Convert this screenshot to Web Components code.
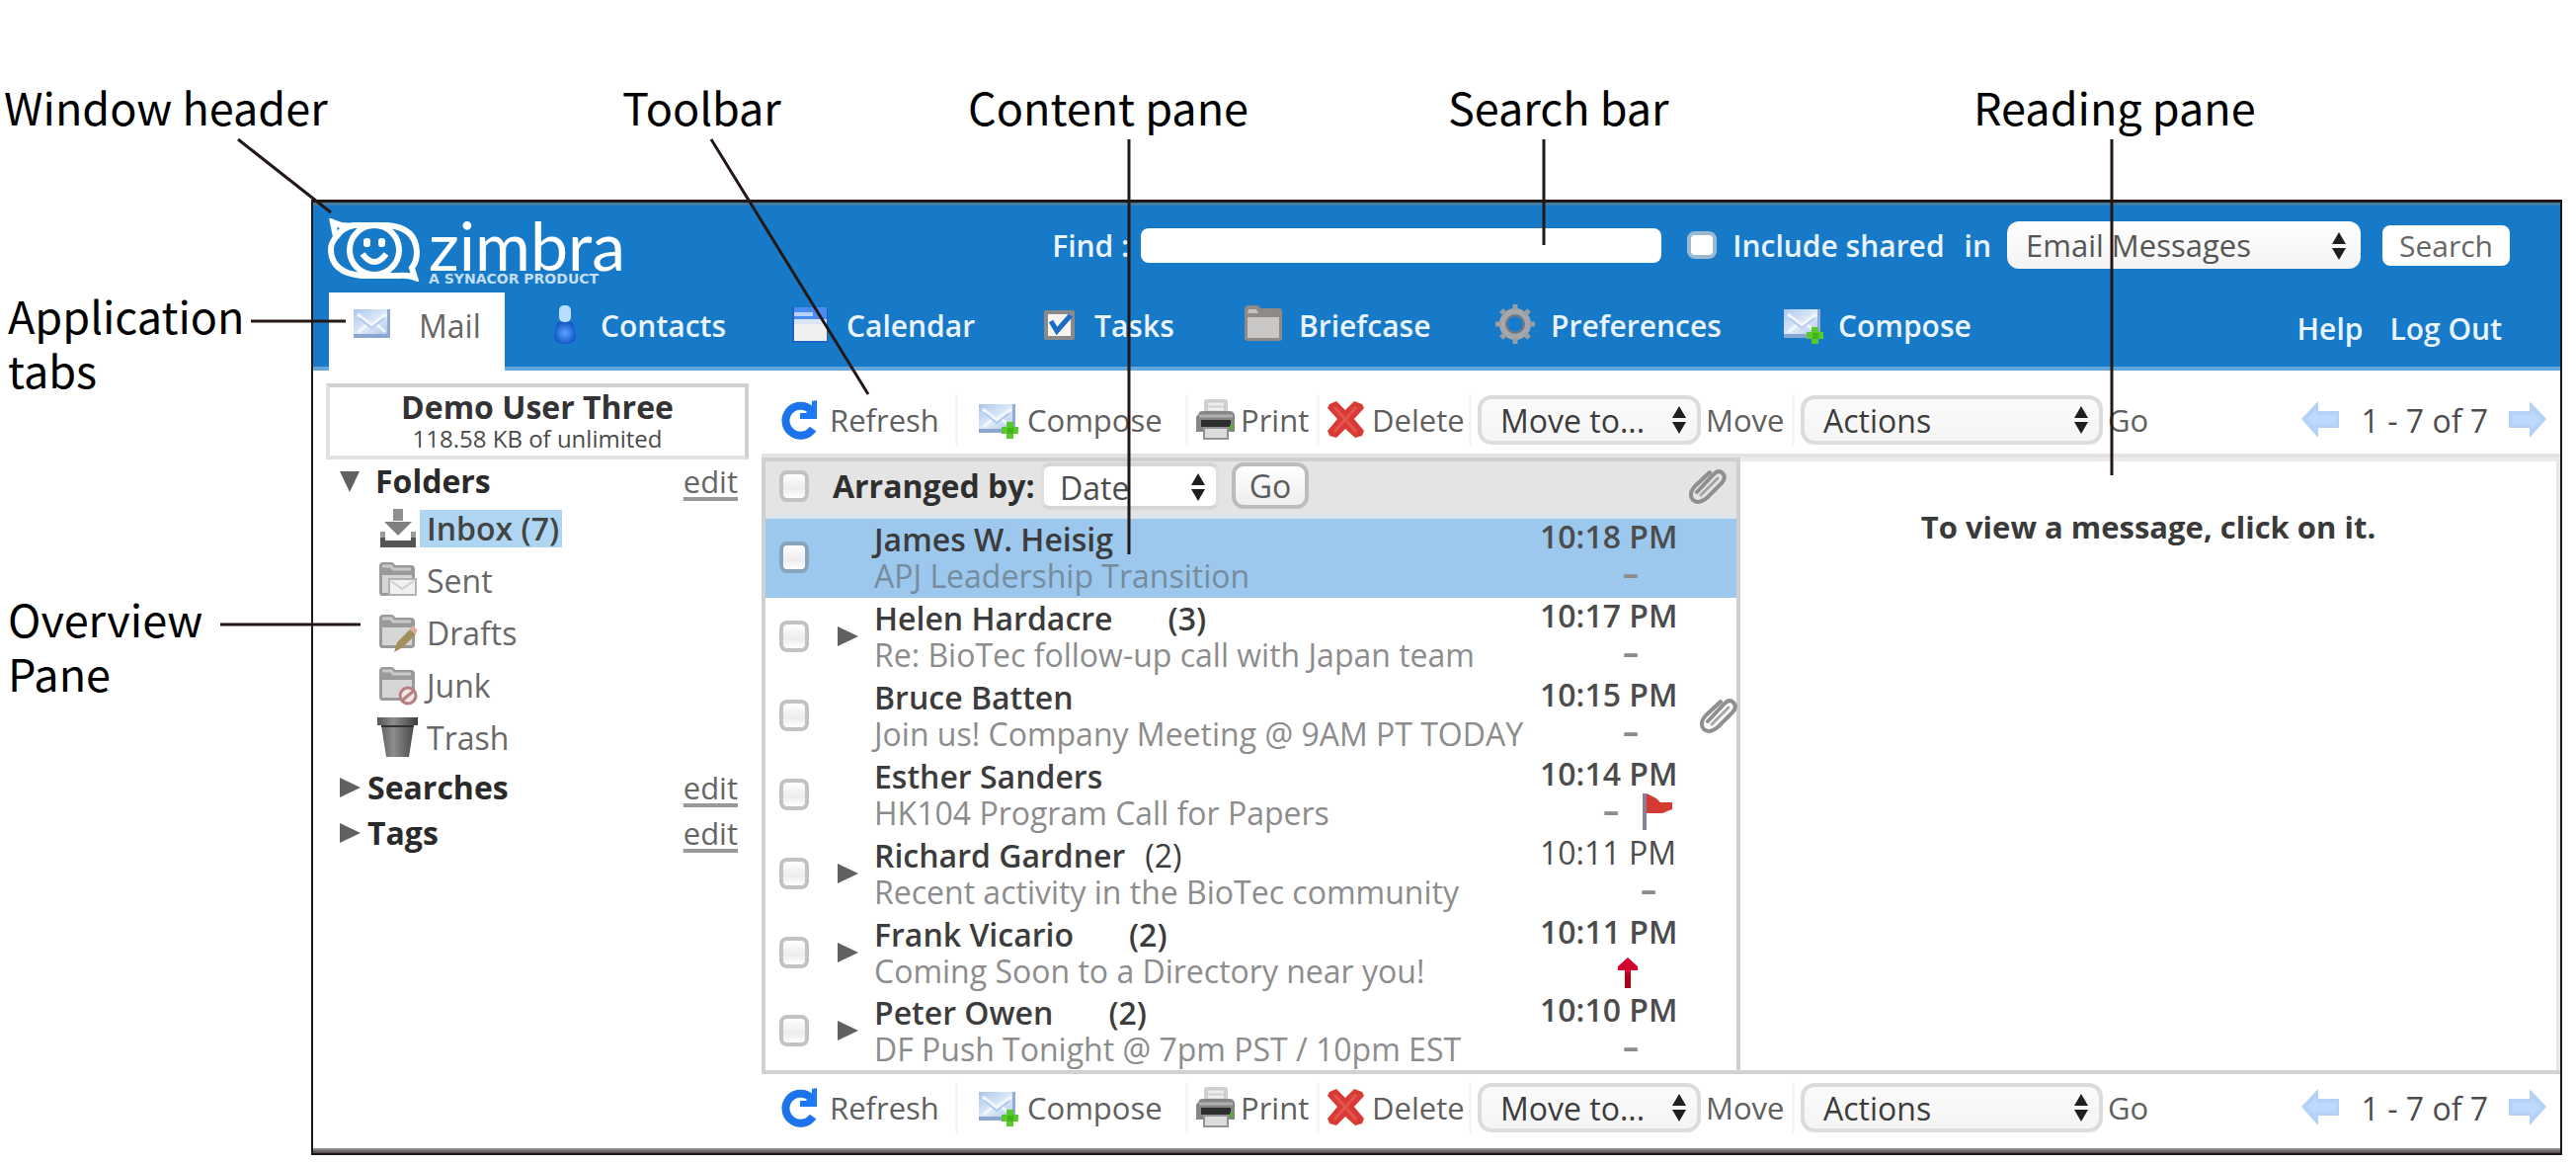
<!DOCTYPE html>
<html lang="en">
<head>
<meta charset="utf-8">
<title>Zimbra Web Client – window overview</title>
<style>
  body { margin: 0; background: #fff; font-family: "Open Sans", "Noto Sans", sans-serif; font-size: 32px; color: #444; }
</style>
</head>
<body>
<zm-diagram>
  <zm-callout style="left:4px;top:80px">Window header</zm-callout>
  <zm-callout style="left:630px;top:80px">Toolbar</zm-callout>
  <zm-callout style="left:980px;top:80px">Content pane</zm-callout>
  <zm-callout style="left:1466px;top:80px">Search bar</zm-callout>
  <zm-callout style="left:1998px;top:80px">Reading pane</zm-callout>
  <zm-callout style="left:8px;top:291px">Application<br>tabs</zm-callout>
  <zm-callout style="left:8px;top:598px">Overview<br>Pane</zm-callout>
  <zm-window slot="window">
    <zm-header slot="header"></zm-header>
    <zm-overview slot="overview"></zm-overview>
    <zm-toolbar slot="top" label="Top toolbar"></zm-toolbar>
    <zm-list slot="list">
      <zm-message selected subject="APJ Leadership Transition" time="10:18 PM">James W. Heisig</zm-message>
      <zm-message thread count="(3)" subject="Re: BioTec follow-up call with Japan team" time="10:17 PM">Helen Hardacre</zm-message>
      <zm-message subject="Join us! Company Meeting @ 9AM PT TODAY" time="10:15 PM" clip>Bruce Batten</zm-message>
      <zm-message subject="HK104 Program Call for Papers" time="10:14 PM" mark="flag">Esther Sanders</zm-message>
      <zm-message thread read count="(2)" subject="Recent activity in the BioTec community" time="10:11 PM" mark="end">Richard Gardner</zm-message>
      <zm-message thread count="(2)" subject="Coming Soon to a Directory near you!" time="10:11 PM" mark="high">Frank Vicario</zm-message>
      <zm-message thread count="(2)" subject="DF Push Tonight @ 7pm PST / 10pm EST" time="10:10 PM">Peter Owen</zm-message>
    </zm-list>
    <zm-reader slot="reader">To view a message, click on it.</zm-reader>
    <zm-toolbar slot="bottom" label="Bottom toolbar"></zm-toolbar>
  </zm-window>
</zm-diagram>

<script>
const mailBody = `<defs><linearGradient id="m" x1="0" y1="0" x2="1" y2="1"><stop offset="0" stop-color="#a9c6ee"/><stop offset=".5" stop-color="#dfeafa"/><stop offset="1" stop-color="#a3bfe6"/></linearGradient></defs>
  <rect x="1" y="5" width="37" height="28" fill="url(#m)"/><rect x="1" y="30" width="37" height="4" fill="#8aa6cf"/><rect x="35" y="5" width="3" height="29" fill="#8fabd3"/>
  <path d="M5 10 L19 21 L34 10 M6 28 L15 20 M33 28 L24 20" fill="none" stroke="#f3f8ff" stroke-width="3"/><path d="M7 14 L19 24 L32 14" fill="none" stroke="#b3caef" stroke-width="2"/>`;
const folder = `<path d="M2 6 Q2 2 6 2 H14 Q17 2 18 5 H34 Q38 5 38 9 V33 Q38 36 34 36 H5 Q2 36 2 32 Z" fill="#9a9a9a"/><path d="M5 15 H35 V33 H5 Z" fill="#d6d6d6"/><path d="M5 6 H14 L16 9 H34" stroke="#c9c9c9" stroke-width="3" fill="none"/>`;
const icons = {
  mail: mailBody,
  compose: mailBody + `<path d="M29 23 H36 V28 H41 V35 H36 V40 H29 V35 H24 V28 H29 Z" fill="#58c92c"/><path d="M30 29 H36 V35 H30 Z" fill="#3fb416"/>`,
  contact: `<defs><radialGradient id="c"><stop offset="0" stop-color="#5ba4ff"/><stop offset="1" stop-color="#1559c9"/></radialGradient></defs><rect x="14" y="1" width="12" height="17" rx="5" fill="#b9dcff"/><path d="M13 18 H27 Q31 24 31 32 Q31 40 20 40 Q9 40 9 32 Q9 24 13 18 Z" fill="url(#c)"/>`,
  calendar: `<rect x="1" y="3" width="36" height="36" fill="#1c63c6"/><rect x="3" y="3" width="33" height="15" fill="#4a8df2"/><path d="M3 8 H22 V12 H3 Z" fill="#b8d0fa"/><rect x="3" y="15" width="33" height="5" fill="#d9e6fb"/><rect x="3" y="20" width="33" height="17" fill="#f1f0ee"/>`,
  tasks: `<rect x="5" y="6" width="31" height="30" rx="2" fill="#8b8a8a"/><rect x="9" y="10" width="23" height="22" fill="#f6f4ef"/><path d="M12 17 L18 27 L32 11" fill="none" stroke="#1c6cc4" stroke-width="5"/>`,
  briefcase: `<path d="M1 6 Q1 1 6 1 H13 Q16 1 17 4 H36 Q39 4 39 8 V34 Q39 37 36 37 H4 Q1 37 1 34 Z" fill="#8f8a86"/><path d="M4 13 H36 V34 H4 Z" fill="#c9c8c7"/><path d="M5 5 H13 L15 9 H4 Z" fill="#c5c2c0"/>`,
  gear: `<circle cx="20" cy="20" r="12" fill="none" stroke="#a5a7aa" stroke-width="8"/><g stroke="#9b9da0" stroke-width="5"><path d="M20 0 V6 M20 34 V40 M0 20 H6 M34 20 H40 M6 6 L10 10 M30 30 L34 34 M34 6 L30 10 M6 34 L10 30"/></g><circle cx="20" cy="20" r="9" fill="none" stroke="#72777d" stroke-width="2"/>`,
  refresh: `<path d="M31 11 A15 15 0 1 0 33 30" fill="none" stroke="#1c73ea" stroke-width="8"/><path d="M37 1 V20 H20 V14 H26 L32 8 V2 Z" fill="#1b79f5"/>`,
  print: `<rect x="9" y="0" width="24" height="18" rx="3" fill="#cfcfcf"/><path d="M13 5 H29 M13 10 H29" stroke="#ededed" stroke-width="3"/><path d="M4 14 Q4 12 8 12 H34 Q40 12 40 17 V33 H1 V18 Z" fill="#868686"/><path d="M4 17 H38" stroke="#b0b0b0" stroke-width="3"/><rect x="6" y="21" width="30" height="7" fill="#2e2e2e"/><rect x="35" y="26" width="4" height="5" fill="#58a83c"/><path d="M9 29 H33 V40 H9 Z" fill="#dcdcdc" stroke="#949494" stroke-width="2"/>`,
  remove: `<path d="M3 5 L10 2 L19 11 L28 2 L36 5 L38 9 L28 20 L38 32 L36 37 L29 39 L19 30 L10 39 L3 37 L1 32 L11 20 L1 9 Z" fill="#da3a34"/><path d="M8 8 L30 33 M30 8 L8 33" stroke="#e4544d" stroke-width="3"/>`,
  inbox: `<rect x="16" y="1" width="10" height="12" fill="#909090"/><path d="M7 14 H35 L21 28 Z" fill="#808080"/><path d="M3 24 H8 V33 H34 V24 H39 V40 H3 Z" fill="#555"/><path d="M3 24 H8 V30 H3 Z M34 24 H39 V30 H34 Z" fill="#9b9b9b"/>`,
  sent: folder + `<path d="M12 19 H39 V35 H12 Z" fill="#f1f1f1" stroke="#b2b2b2" stroke-width="2"/><path d="M14 21 L25 29 L37 21" fill="none" stroke="#cfcfcf" stroke-width="2"/>`,
  drafts: folder + `<path d="M17 40 L20 30 L33 17 L39 22 L26 35 Z" fill="#a1905a"/><path d="M33 17 L36 13 L41 18 L38 22 Z" fill="#e3a9a4"/>`,
  junk: folder + `<circle cx="31" cy="31" r="8" fill="#f3e6e5" stroke="#b5817f" stroke-width="3"/><path d="M25 36 L37 26" stroke="#b5817f" stroke-width="3"/>`,
  trash: `<defs><linearGradient id="t"><stop offset="0" stop-color="#555"/><stop offset=".4" stop-color="#8d8d8d"/><stop offset="1" stop-color="#3c3c3c"/></linearGradient></defs><path d="M0 0 H41 V8 H37 L32 40 H9 L4 8 H0 Z" fill="url(#t)"/><path d="M4 9 H37" stroke="#333" stroke-width="2"/>`,
  clip: `<g fill="none" stroke="#8f8f8f" stroke-width="4" stroke-linecap="round"><path d="M10 27 L27 9 Q32 4 36 8 Q40 12 35 18 L21 32 Q12 40 6 35 Q1 29 8 21 L23 7"/><path d="M14 30 L31 13" stroke="#a5a5a5" stroke-width="3"/></g>`,
  flag: `<g transform="translate(0 4)"><path d="M4 0 V37" stroke="#8b7f95" stroke-width="4"/><path d="M6 0 L16 5 L20 9 H32 V16 L22 20 H6 Z" fill="#d53a33"/></g>`,
  high: `<g transform="translate(0 10)"><path d="M11 0 L21 9 V13 H14 V31 H8 V13 H1 V9 Z" fill="#d4002e"/><path d="M8 16 H14 V31 H8 Z" fill="#b00016"/></g>`,
  prev: `<path d="M1 20 L18 2 V12 H39 V29 H18 V39 Z" fill="#b4d2f8"/><path d="M7 20 L16 11 V16 H36 V25 H16 V30 Z" fill="#bddafc"/>`,
  next: `<path d="M39 20 L22 2 V12 H1 V29 H22 V39 Z" fill="#b4d2f8"/><path d="M33 20 L24 11 V16 H4 V25 H24 V30 Z" fill="#bddafc"/>`
};

const reset = `*{box-sizing:border-box} button,select,input{font:inherit;color:inherit;margin:0} button{border:0;background:none;padding:0;cursor:pointer;white-space:nowrap} a{color:inherit}
  .check{appearance:none;width:30px;height:32px;border:4px solid #c2c2c2;border-radius:8px;background:linear-gradient(#fff,#ececec 60%,#fff)}`;

function define(name, render) {
  customElements.define(name, class extends HTMLElement {
    connectedCallback() {
      if (this.shadowRoot) return;
      this.attachShadow({ mode: "open" }).innerHTML = render(this);
    }
  });
}

define("zm-icon", el => `<style>:host{display:block;flex:none;width:42px;height:42px}svg{display:block;width:100%;height:100%}</style>
  <svg viewBox="0 0 42 42" aria-hidden="true">${icons[el.getAttribute("name")]}</svg>`);

define("zm-twisty", () => `<style>:host{display:block;flex:none;width:24px;height:24px}:host([open]){transform:rotate(90deg)}svg{display:block}</style>
  <svg width="24" height="24" aria-hidden="true"><path d="M2 2 L23 12 L2 22 Z" fill="#616161"/></svg>`);

define("zm-select", el => `<style>${reset}
  :host{display:block;position:relative;height:50px}
  select{appearance:none;width:100%;height:100%;padding:0 40px 0 19px;border:4px solid #dcdcdc;border-radius:14px;background:linear-gradient(#fafafa,#f5f5f5);text-overflow:clip}
  :host([plain]) select{border:0;border-radius:12px;background:linear-gradient(#fff,#f3f3f3)}
  :host([small]) select{border-color:#d6d6d6 #e0e0e0;border-radius:10px;background:#fff;padding-left:16px}
  svg{position:absolute;right:14px;top:11px;pointer-events:none}</style>
  <select aria-label="${el.getAttribute("label")}">${el.getAttribute("options").split("|").map(o => `<option>${o}</option>`).join("")}</select>
  <svg width="16" height="28" aria-hidden="true"><path d="M8 0 L15 12 H1 Z M1 16 H15 L8 28 Z" fill="#1f1f1f"/></svg>`);

define("zm-callout", () => `<style>:host{position:absolute;font:400 45px/55px "Noto Sans CJK JP","Open Sans",sans-serif;color:#000;white-space:nowrap}</style><slot></slot>`);

define("zm-diagram", () => `<style>
  :host{display:block;position:relative;padding:202px 14px 0 315px}
  .lines{position:absolute;inset:0;width:100%;height:100%;pointer-events:none}
  </style>
  <slot name="window"></slot>
  <svg class="lines" aria-hidden="true"><g stroke="#231815" stroke-width="3"><path d="M241 141 L335 215 M720 141 L879 399 M1143 141 V561 M1563 141 V248 M2138 141 V481 M254 325 H350 M223 632 H365"/></g></svg>
  <slot></slot>`);

define("zm-window", () => `<style>${reset}
  :host{display:block;border:3px solid #231815;border-width:3px 2px 2px;background:#fff}
  .body{display:flex;align-items:stretch}
  .side{flex:0 0 454px}
  .main{flex:1;min-width:0}
  .panes{display:flex;border-top:4px solid #e3e3e3;border-bottom:4px solid #d2d2d2}
  ::slotted(zm-list){flex:989 1 0;min-width:0}
  ::slotted(zm-reader){flex:831 1 0;min-width:0}
  .top{padding-top:16px}.bottom{padding-bottom:7px}
  .foot{height:5px;background:linear-gradient(#9a9a9a,#4a4646)}</style>
  <slot name="header"></slot>
  <div class="body"><div class="side"><slot name="overview"></slot></div>
    <div class="main"><div class="top"><slot name="top"></slot></div>
      <div class="panes"><slot name="list"></slot><slot name="reader"></slot></div>
      <div class="bottom"><slot name="bottom"></slot></div></div></div>
  <div class="foot"></div>`);

define("zm-logo", () => `<style>
  :host{display:flex;gap:6px;color:#fff;align-items:flex-start}
  svg{display:block;width:98px;height:64px}
  .word{font:400 68px/54px Lato,sans-serif}
  .sub{font:700 14px/14px "DejaVu Sans",sans-serif;color:#c4def5;white-space:nowrap}</style>
  <svg viewBox="0 0 98 64" aria-hidden="true"><g fill="none" stroke="#fff" stroke-width="6"><path d="M10 19 L7 4 Q17 9 28 7 H62 Q91 9 92 34 Q92 44 87 50 L90 60 Q82 57 74 58 H36 Q5 55 5 31 Q5 24 12 17 Q16 10 28 7"/><circle cx="49" cy="32" r="25"/></g><g fill="#fff"><rect x="38" y="20" width="7" height="9" rx="3"/><rect x="53" y="20" width="7" height="9" rx="3"/></g><path d="M37 36 Q49 52 61 36" fill="none" stroke="#fff" stroke-width="6"/></svg>
  <div><div class="word">zimbra</div><div class="sub">A SYNACOR PRODUCT</div></div>`);

define("zm-header", () => {
  const tab = (icon, text) => `<a href="#"><zm-icon name="${icon}"></zm-icon>${text}</a>`;
  return `<style>${reset}
  :host{display:block;background:#177ac9;color:#eaf4ff;border-top:3px solid #3f7cab;font-weight:600;font-size:30px}
  .find{display:flex;align-items:center;height:88px;padding:0 51px 8px 13px}
  zm-logo{margin-right:auto;align-self:flex-start;padding-top:13px}
  form{display:flex;align-items:center}
  .q{width:527px;height:35px;border:0;border-radius:8px;background:#fff;margin:0 26px 0 12px;padding:0 12px;color:#333}
  .check{height:28px;margin-right:16px;border-color:#9db9d2;background:#fff}
  .in{margin:0 16px 0 20px}
  zm-select{width:358px;height:48px;color:#555;font-weight:400;font-size:31px;margin-right:22px}
  .go{width:129px;height:41px;border-radius:8px;background:#fff;color:#666;font-weight:400;line-height:41px}
  nav{display:flex;height:79px;border-bottom:4px solid #65a6dc}
  .tabs{display:grid;grid-template-columns:219px 249px 251px 207px 255px 291px 240px;margin-left:16px;height:79px}
  a{display:flex;align-items:center;gap:14px;text-decoration:none;padding-bottom:13px;white-space:nowrap}
  a.on{background:#fff;color:#666;width:178px;padding-left:24px;gap:25px;font-weight:400;font-size:32px}
  .links{margin-left:auto;display:flex;gap:27px;padding-right:59px}
  .links a{padding-bottom:2px}</style>
  <div class="find"><zm-logo></zm-logo>
    <form onsubmit="return false"><label for="q">Find :</label><input class="q" id="q" type="text">
      <input class="check" type="checkbox" id="sh"><label for="sh">Include shared</label><span class="in">in</span>
      <zm-select plain label="in" options="Email Messages|Contacts|Files"></zm-select>
      <button class="go">Search</button></form></div>
  <nav><div class="tabs"><a class="on" href="#"><zm-icon name="mail"></zm-icon>Mail</a>
    ${tab("contact", "Contacts")}${tab("calendar", "Calendar")}${tab("tasks", "Tasks")}${tab("briefcase", "Briefcase")}${tab("gear", "Preferences")}${tab("compose", "Compose")}</div>
    <div class="links"><a href="#">Help</a><a href="#">Log Out</a></div></nav>`;
});

define("zm-overview", () => {
  const item = (icon, text, on) => `<li><zm-icon name="${icon}"></zm-icon><a href="#" class="${on ? "on" : ""}">${text}</a></li>`;
  return `<style>${reset}
  :host{display:block;padding:13px 0 0 13px}
  .user{width:428px;height:77px;border:4px solid #dedede;border-color:#d0d0d0 #cfcfcf #e2e2e2 #e2e2e2;text-align:center;color:#333;padding-top:2px}
  .user b{display:block;line-height:36px}.user span{display:block;font-size:24px;line-height:28px;color:#4a4a4a}
  h2{display:flex;align-items:center;gap:6px;margin:0;height:46px;font-size:32px;line-height:46px;color:#2a2a2a;padding:0 24px 0 12px}
  h2.first{height:43px;gap:14px}
  h2 a{margin-left:auto;font-weight:400;font-size:31px;color:#666;text-decoration-thickness:4px;text-decoration-color:#999;text-underline-offset:4px}
  ul{list-style:none;margin:0;padding:0 0 1px 52px}
  li{display:flex;align-items:center;height:53px;gap:1px}
  li a{text-decoration:none;color:#686868;padding:0 7px;line-height:38px}
  li a.on{background:#aed5f2;color:#444;font-weight:600;padding-right:3px}</style>
  <div class="user"><b>Demo User Three</b><span>118.58 KB of unlimited</span></div>
  <h2 class="first"><zm-twisty open></zm-twisty>Folders<a href="#">edit</a></h2>
  <ul>${item("inbox", "Inbox (7)", true)}${item("sent", "Sent")}${item("drafts", "Drafts")}${item("junk", "Junk")}${item("trash", "Trash")}</ul>
  <h2><zm-twisty></zm-twisty>Searches<a href="#">edit</a></h2>
  <h2><zm-twisty></zm-twisty>Tags<a href="#">edit</a></h2>`;
});

define("zm-toolbar", el => `<style>${reset}
  :host{display:flex;align-items:center;height:68px;color:#606060}
  .cells{display:grid;grid-template-columns:199px 233px 133px 154px 327px 360px;align-items:center}
  .cell{display:flex;align-items:center;height:52px;border-right:3px solid #f5f5f5}
  .cell:last-child{border:0}
  button{display:flex;align-items:center;gap:8px;font-size:31px}
  .tight button{gap:4px}
  .cell:nth-child(1){padding-left:19px}.cell:nth-child(2){padding-left:20px}
  .cell:nth-child(3),.cell:nth-child(4){padding-left:7px}
  .cell:nth-child(n+5){padding-left:6px;gap:5px}
  zm-select{color:#3c3c3c}
  .move{width:226px}.act{width:306px}
  .pager{margin-left:auto;display:flex;align-items:center;gap:20px;padding-right:11px;color:#4c4c4c;white-space:nowrap}</style>
  <div class="cells" role="toolbar" aria-label="${el.getAttribute("label")}">
    <div class="cell"><button><zm-icon name="refresh"></zm-icon>Refresh</button></div>
    <div class="cell"><button><zm-icon name="compose"></zm-icon>Compose</button></div>
    <div class="cell tight"><button><zm-icon name="print"></zm-icon>Print</button></div>
    <div class="cell tight"><button><zm-icon name="remove"></zm-icon>Delete</button></div>
    <div class="cell"><zm-select class="move" label="Move to" options="Move to...|Inbox|Trash"></zm-select><button>Move</button></div>
    <div class="cell"><zm-select class="act" label="Actions" options="Actions|Mark as read|Flag"></zm-select><button>Go</button></div>
  </div>
  <div class="pager"><button aria-label="Previous page"><zm-icon name="prev"></zm-icon></button><span>1 - 7 of 7</span><button aria-label="Next page"><zm-icon name="next"></zm-icon></button></div>`);

define("zm-list", () => `<style>${reset}
  :host{display:block;border-top:4px solid #cfcfcf;border-left:4px solid #d0d0d0;border-right:4px solid #cfcfcf}
  .head{display:flex;align-items:center;height:58px;padding-bottom:5px;background:#e4e4e4;border-bottom:4px solid #dde5ec}
  .pick{display:flex;align-items:center;padding-left:14px;width:61px}
  b{color:#2f2f2f;padding-left:7px;width:217px;white-space:nowrap}
  zm-select{width:182px;height:48px;color:#4c4c4c}
  .go{width:78px;height:47px;margin-left:12px;border:4px solid #bcbcbc;border-radius:12px;background:linear-gradient(#fff,#eee);color:#5c5c5c;line-height:36px}
  .clip{margin-left:auto;width:54px;padding-left:4px}
  ::slotted(zm-message:last-of-type){height:78px}</style>
  <div class="head"><div class="pick"><input class="check" type="checkbox" aria-label="Select all"></div>
    <b>Arranged by:</b><zm-select small label="Arranged by" options="Date|Subject|Size"></zm-select><button class="go">Go</button>
    <div class="clip"><zm-icon name="clip"></zm-icon></div></div>
  <slot></slot>`);

define("zm-message", el => {
  const a = n => el.getAttribute(n), has = n => el.hasAttribute(n), mark = a("mark");
  const dash = `<i>–</i>`;
  const state = mark === "flag" ? dash + `<zm-icon name="flag"></zm-icon>` : mark === "high" ? `<zm-icon name="high"></zm-icon>` : dash;
  return `<style>${reset}
  :host{display:grid;grid-template-columns:62px 48px 1fr 136px 63px;align-items:center;height:80px;padding-bottom:3px;box-sizing:border-box;color:#3c3c3c}
  :host([selected]){background:#9bc8ec}
  .check{margin-left:14px}
  :host([selected]) .check{border-color:#86a5bd}
  zm-twisty{margin-left:9px}
  .name{display:flex;gap:56px;font-weight:600;line-height:38px;white-space:nowrap}
  :host([read]) .name{gap:20px}:host([read]) .name span{font-weight:400}
  .subject{line-height:36px;color:#8c8c8c;white-space:nowrap}
  :host([selected]) .subject{color:#758c9f}
  .time{line-height:32px;color:#4c4c4c;font-weight:600;white-space:nowrap;text-align:right}
  :host([read]) .time{font-weight:400}
  .state{display:flex;justify-content:flex-end;align-items:center;height:42px;padding-right:36px;color:#8c8c8c;line-height:42px}
  .state[data-mark=flag]{padding:0;gap:22px}.state[data-mark=end]{padding-right:18px}
  i{font-style:normal;font-weight:700}
  .state[data-mark=flag] zm-icon{margin-right:-8px}
  .state[data-mark=high] zm-icon{margin-right:-20px}
  .clip{padding-left:24px}</style>
  <input class="check" type="checkbox" aria-label="Select message">
  <div>${has("thread") ? "<zm-twisty></zm-twisty>" : ""}</div>
  <div><div class="name"><slot></slot>${a("count") ? `<span>${a("count")}</span>` : ""}</div><div class="subject">${a("subject")}</div></div>
  <div><div class="time">${a("time")}</div><div class="state" data-mark="${mark || ""}">${state}</div></div>
  <div class="clip">${has("clip") ? `<zm-icon name="clip"></zm-icon>` : ""}</div>`;
});

define("zm-reader", () => `<style>:host{display:block;border-top:4px solid #ebebeb;border-right:4px solid #e6e6e6;text-align:center;font-weight:700;font-size:31px;color:#3a3a3a;padding-top:44px;line-height:44px}</style><slot></slot>`);
</script>
</body>
</html>
